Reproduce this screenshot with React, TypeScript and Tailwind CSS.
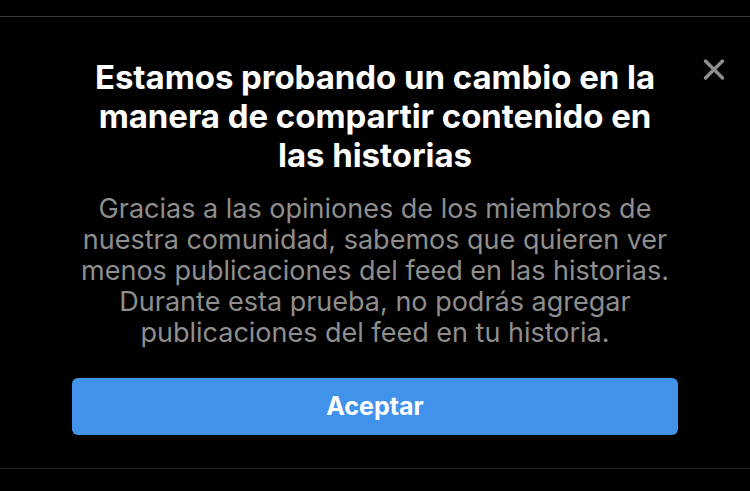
import { X } from 'lucide-react';

export default function App() {
  return (
    <div
      className="relative flex h-[491px] w-[750px] flex-col bg-black"
      style={{ fontFamily: 'Inter, "Noto Sans", sans-serif' }}
    >
      <div className="h-4" />
      <div className="h-px bg-[#3a3a3a]" />

      {/* Close button */}
      <button className="absolute left-[697px] top-[52px] flex h-[34px] w-[34px] items-center justify-center text-[#8e8e8e]">
        <X size={35} strokeWidth={2.4} />
      </button>

      <div className="flex flex-col items-center px-[72px]">
        <h1 className="mt-[41px] whitespace-nowrap text-center text-[33px] font-bold leading-[39px] tracking-[-0.05px] text-white">
          Estamos probando un cambio en la
          <br />
          manera de compartir contenido en
          <br />
          las historias
        </h1>
        <p className="mt-[18px] whitespace-nowrap text-center text-[27px] leading-[31px] text-[#8e8e8e]">
          Gracias a las opiniones de los miembros de
          <br />
          nuestra comunidad, sabemos que quieren ver
          <br />
          menos publicaciones del feed en las historias.
          <br />
          Durante esta prueba, no podrás agregar
          <br />
          publicaciones del feed en tu historia.
        </p>
        <button className="mt-[30px] flex h-[57px] w-full items-center justify-center rounded-[6px] bg-[#4192ea] text-[25px] font-bold text-white">
          Aceptar
        </button>
      </div>

      <div className="mt-[33px] h-px bg-[#262626]" />
    </div>
  );
}
